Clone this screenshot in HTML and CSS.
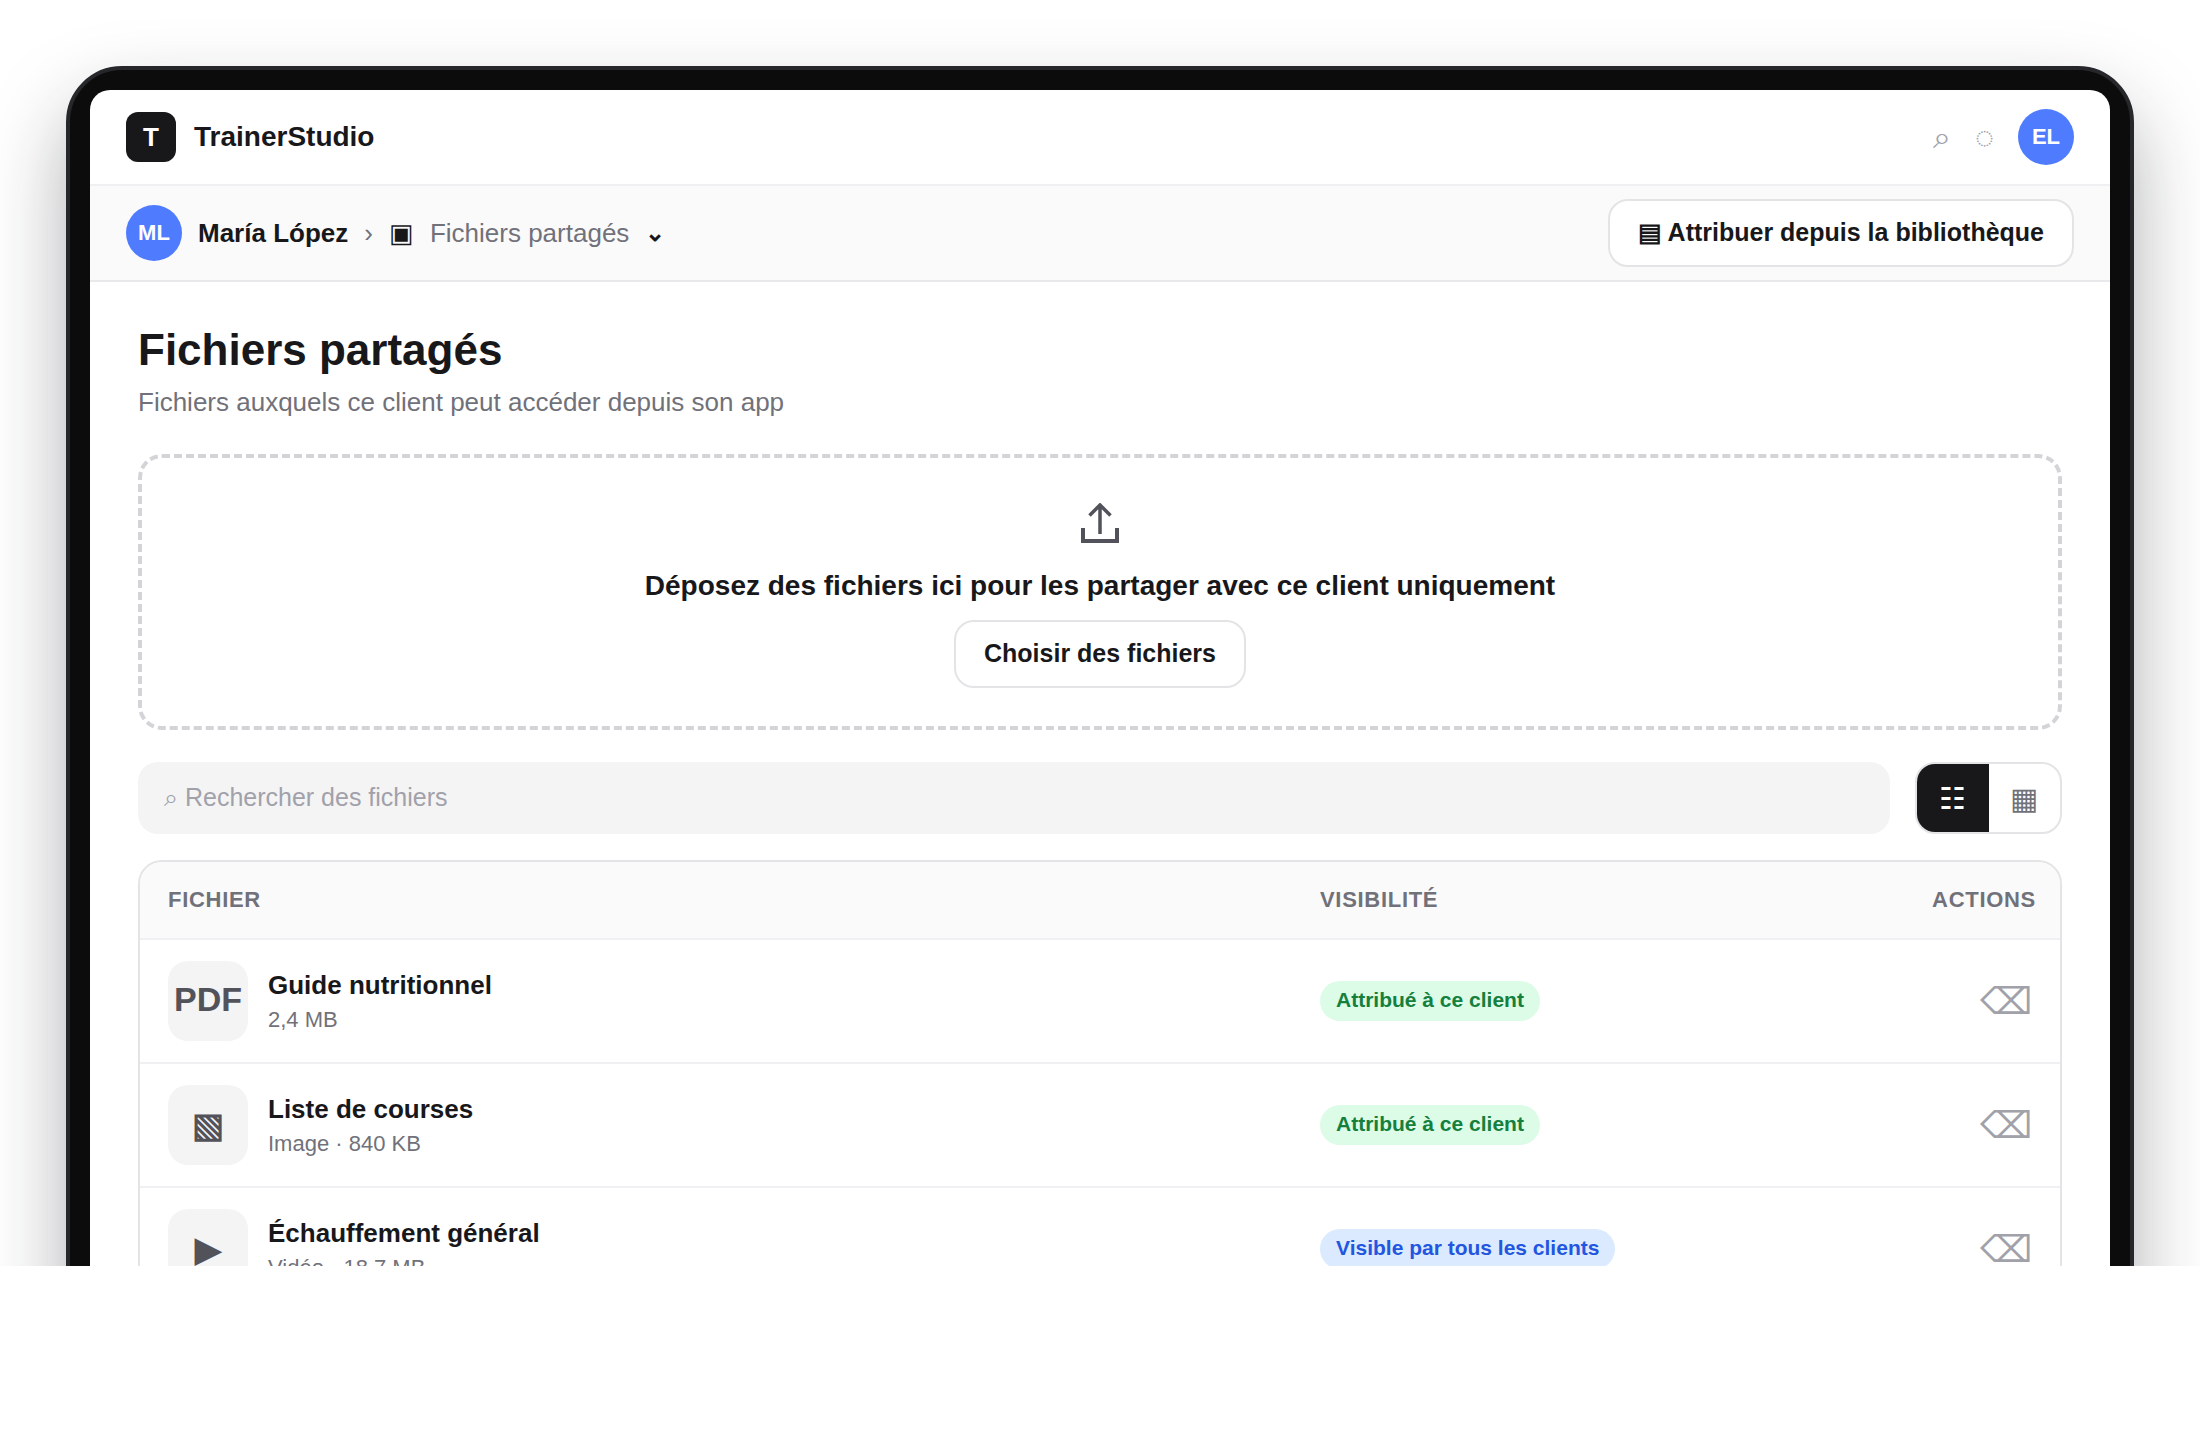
FILE: index.html
```html
<!DOCTYPE html>
<html lang="fr">
<head>
    <meta charset="UTF-8">
    <title>TrainerStudio</title>
    <link rel="stylesheet" href="styles.css">
</head>
<body>
    <div class="stage">
        <div class="frame">
            <div class="screen">
                <header class="topbar">
                    <div class="brand">
                        <span class="logo">T</span>
                        <span class="brand-name">TrainerStudio</span>
                    </div>
                    <div class="top-actions">
                        <span class="top-icon">⌕</span>
                        <span class="top-icon">◌</span>
                        <span class="avatar">EL</span>
                    </div>
                </header>

                <nav class="crumbbar">
                    <div class="crumbs">
                        <span class="avatar">ML</span>
                        <strong class="crumb-name">María López</strong>
                        <span class="crumb-sep">›</span>
                        <span class="crumb-icon">▣</span>
                        <span class="crumb-page">Fichiers partagés</span>
                        <span class="crumb-caret">⌄</span>
                    </div>
                    <button class="btn">▤ Attribuer depuis la bibliothèque</button>
                </nav>

                <main class="content">
                    <h1>Fichiers partagés</h1>
                    <p class="subtitle">Fichiers auxquels ce client peut accéder depuis son app</p>

                    <section class="dropzone">
                        <svg class="upload-icon" width="38" height="40" viewBox="0 0 38 40" fill="none" stroke="#52525b" stroke-width="3.500">
                            <path d="M19 31V2M8.500 12.500 19 2l10.500 10.500"/>
                            <path d="M2 25v13h34V25" stroke-width="4"/>
                        </svg>
                        <p class="drop-text">Déposez des fichiers ici pour les partager avec ce client uniquement</p>
                        <button class="btn">Choisir des fichiers</button>
                    </section>

                    <div class="toolbar">
                        <div class="search">⌕ Rechercher des fichiers</div>
                        <div class="view-toggle">
                            <span class="view-btn active">☷</span>
                            <span class="view-btn">▦</span>
                        </div>
                    </div>

                    <div class="table">
                        <div class="row head">
                            <span>Fichier</span>
                            <span>Visibilité</span>
                            <span class="col-actions">Actions</span>
                        </div>
                        <div class="row">
                            <div class="file">
                                <span class="file-icon pdf">PDF</span>
                                <div>
                                    <div class="file-name">Guide nutritionnel</div>
                                    <div class="file-meta">2,4 MB</div>
                                </div>
                            </div>
                            <div><span class="pill green">Attribué à ce client</span></div>
                            <div class="col-actions"><span class="trash">⌫</span></div>
                        </div>
                        <div class="row">
                            <div class="file">
                                <span class="file-icon">▧</span>
                                <div>
                                    <div class="file-name">Liste de courses</div>
                                    <div class="file-meta">Image · 840 KB</div>
                                </div>
                            </div>
                            <div><span class="pill green">Attribué à ce client</span></div>
                            <div class="col-actions"><span class="trash">⌫</span></div>
                        </div>
                        <div class="row">
                            <div class="file">
                                <span class="file-icon">▶</span>
                                <div>
                                    <div class="file-name">Échauffement général</div>
                                    <div class="file-meta">Vidéo · 18,7 MB</div>
                                </div>
                            </div>
                            <div><span class="pill blue">Visible par tous les clients</span></div>
                            <div class="col-actions"><span class="trash">⌫</span></div>
                        </div>
                    </div>
                </main>
            </div>
        </div>
    </div>
</body>
</html>
```

FILE: styles.css
```css
* {
    box-sizing: border-box;
}
body {
    margin: 0;
    background-color: #fff;
    font-family: 'Liberation Sans', sans-serif;
    color: #18181b;
}
.stage {
    height: 1266px;
    padding: 66px 66px 0;
    overflow: hidden;
}
.frame {
    height: 1400px;
    background-color: #0c0c0d;
    border: 4px solid #26272b;
    border-radius: 56px;
    padding: 20px;
    box-shadow: 0 40px 80px rgba(24, 26, 32, 0.34);
}
.screen {
    height: 100%;
    background-color: #fff;
    border-radius: 20px;
    overflow: hidden;
}
.topbar {
    display: flex;
    justify-content: space-between;
    align-items: center;
    padding: 19px 36px;
    border-bottom: 2px solid #f0f0f2;
}
.brand {
    display: flex;
    align-items: center;
    gap: 18px;
}
.logo {
    display: flex;
    justify-content: center;
    align-items: center;
    width: 50px;
    height: 50px;
    border-radius: 12px;
    background-color: #18181b;
    color: #fff;
    font-size: 26px;
    font-weight: 700;
}
.brand-name {
    font-size: 28px;
    font-weight: 700;
}
.top-actions {
    display: flex;
    align-items: center;
    gap: 24px;
}
.top-icon {
    font-size: 32px;
    color: #a1a1aa;
}
.avatar {
    display: flex;
    justify-content: center;
    align-items: center;
    width: 56px;
    height: 56px;
    border-radius: 50%;
    background-color: #4f7cff;
    color: #fff;
    font-size: 22px;
    font-weight: 700;
}
.crumbbar {
    display: flex;
    justify-content: space-between;
    align-items: center;
    height: 96px;
    padding: 0 36px;
    background-color: #fafafa;
    border-bottom: 2px solid #e9e9ec;
}
.crumbs {
    display: flex;
    align-items: center;
    gap: 16px;
}
.crumb-name {
    font-size: 26px;
}
.crumb-sep {
    font-size: 26px;
    color: #71717a;
}
.crumb-icon {
    font-size: 26px;
}
.crumb-page {
    font-size: 26px;
    color: #71717a;
}
.crumb-caret {
    font-size: 24px;
    font-weight: 700;
}
.btn {
    height: 68px;
    padding: 0 28px 2px;
    background-color: #fff;
    border: 2px solid #e4e4e7;
    border-radius: 20px;
    color: #18181b;
    font-family: inherit;
    font-size: 25px;
    font-weight: 700;
}
.content {
    padding: 42px 48px 0;
}
h1 {
    margin: 0;
    font-size: 44px;
    line-height: 52px;
}
.subtitle {
    margin: 10px 0 0;
    font-size: 26px;
    line-height: 32px;
    color: #71717a;
}
.dropzone {
    display: flex;
    flex-direction: column;
    align-items: center;
    height: 276px;
    margin-top: 36px;
    padding-top: 45px;
    border: 4px dashed #d4d4d8;
    border-radius: 24px;
}
.upload-icon {
    display: block;
}
.drop-text {
    margin: 26px 0 17px;
    font-size: 28px;
    font-weight: 700;
    line-height: 34px;
}
.toolbar {
    display: flex;
    gap: 25px;
    margin-top: 32px;
}
.search {
    flex: 1;
    height: 72px;
    padding: 0 26px;
    background-color: #f4f4f5;
    border-radius: 20px;
    color: #a1a1aa;
    font-size: 25px;
    line-height: 70px;
}
.view-toggle {
    display: flex;
    width: 147px;
    height: 72px;
    border: 2px solid #e4e4e7;
    border-radius: 20px;
    overflow: hidden;
}
.view-btn {
    display: flex;
    flex: 1;
    justify-content: center;
    align-items: center;
    color: #71717a;
    font-size: 30px;
}
.view-btn.active {
    background-color: #18181b;
    color: #fff;
}
.table {
    margin-top: 26px;
    border: 2px solid #e4e4e7;
    border-radius: 24px;
    overflow: hidden;
}
.row {
    display: grid;
    grid-template-columns: 1152px 1fr 200px;
    align-items: center;
    height: 124px;
    padding: 0 24px 0 28px;
    border-top: 2px solid #f0f0f2;
}
.row.head {
    height: 76px;
    background-color: #fafafa;
    border-top: 0;
    color: #71717a;
    font-size: 22px;
    font-weight: 700;
    letter-spacing: 0.7px;
    text-transform: uppercase;
}
.col-actions {
    text-align: right;
}
.file {
    display: flex;
    align-items: center;
    gap: 20px;
}
.file-icon {
    display: flex;
    justify-content: center;
    align-items: center;
    width: 80px;
    height: 80px;
    border-radius: 20px;
    background-color: #f4f4f5;
    color: #52525b;
    font-size: 34px;
    font-weight: 700;
}
.file-icon.pdf {
    padding-bottom: 4px;
}
.file-name {
    font-size: 26px;
    font-weight: 700;
    line-height: 36px;
}
.file-meta {
    margin: 3px 0 2px;
    font-size: 22px;
    line-height: 28px;
    color: #71717a;
}
.pill {
    display: inline-block;
    height: 40px;
    padding: 0 16px;
    border-radius: 20px;
    font-size: 21px;
    font-weight: 700;
    line-height: 38px;
}
.pill.green {
    background-color: #dcfce7;
    color: #15803d;
}
.pill.blue {
    background-color: #dbeafe;
    color: #2356e0;
}
.trash {
    margin-right: 4px;
    color: #a1a1aa;
    font-size: 37px;
}
```
